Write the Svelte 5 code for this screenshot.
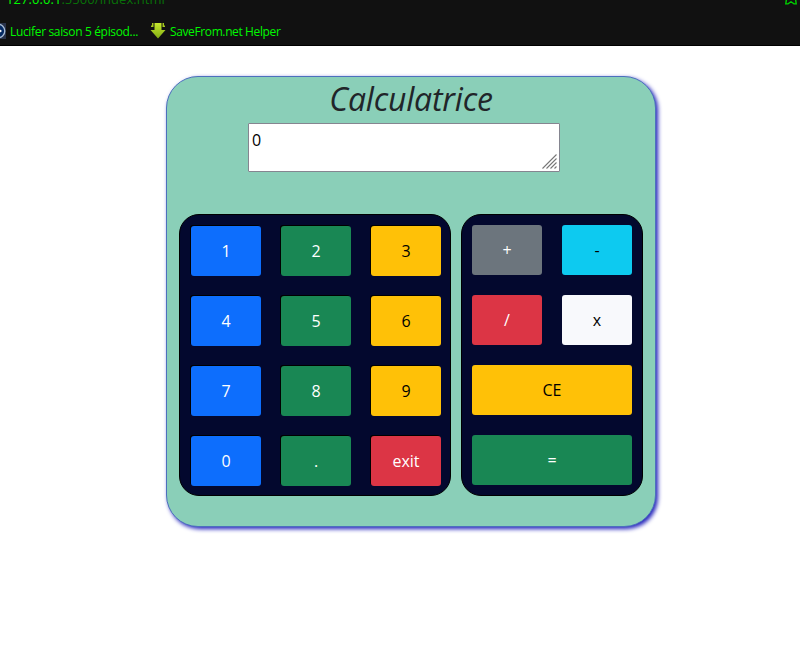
<script>
  const digits = [
    ['1', 'primary'], ['2', 'success'], ['3', 'warning'],
    ['4', 'primary'], ['5', 'success'], ['6', 'warning'],
    ['7', 'primary'], ['8', 'success'], ['9', 'warning'],
    ['0', 'primary'], ['.', 'success'], ['exit', 'danger']
  ];
  const operators = [
    ['+', 'secondary'], ['-', 'info'],
    ['/', 'danger'], ['x', 'light'],
    ['CE', 'warning wide'], ['=', 'success wide']
  ];
</script>

<div class="page">
  <header class="browser">
    <div class="address">
      <div class="url">127.0.0.1<span>:5500/index.html</span></div>
      <svg class="star" width="14" height="14" viewBox="0 0 14 14">
        <path d="M7 1 8.8 5 13 5.4 11.6 8.4 12.2 12.9 10 12.9 7 10.8 4 12.9 1.8 12.9 2.4 8.4 1 5.4 5.2 5Z" fill="none" stroke="#00d000" stroke-width="1.4" />
      </svg>
    </div>
    <nav class="bookmarks">
      <svg class="disc" width="6" height="16" viewBox="10 0 6 16">
        <rect width="16" height="16" fill="#28324a" />
        <circle cx="8" cy="8" r="6.8" fill="#062b64" stroke="#a9bdd6" stroke-width="1.3" />
        <path d="M7 4.5 12 8 7 11.5Z" fill="#fff" />
      </svg>
      <span class="first">Lucifer saison 5 épisod...</span>
      <svg class="arrow" width="16" height="16" viewBox="0 0 16 16">
        <defs>
          <linearGradient id="lime" x2="0" y2="1">
            <stop stop-color="#c6e72d" />
            <stop offset="1" stop-color="#80ad13" />
          </linearGradient>
        </defs>
        <path d="M4.5 0H11.5V7H15.5L8 15.5.5 7H4.5Z" fill="url(#lime)" />
        <path d="M2 0H3.5V4H1V2.5H2ZM12.5 0H14V2.5H15V4H12.5Z" fill="#a5c81e" />
      </svg>
      <span class="second">SaveFrom.net Helper</span>
    </nav>
  </header>

  <main class="calculator">
    <h1>Calculatrice</h1>
    <div class="display">
      0
      <svg width="15" height="15" viewBox="0 0 15 15">
        <path d="M.5 14.5 14.5.5M4.5 14.5 14.5 4.5M8.5 14.5 14.5 8.5M12.5 14.5 14.5 12.5" stroke="#777" stroke-width="1.1" />
      </svg>
    </div>
    <div class="panels">
      <section class="panel digits">
        {#each digits as [label, tone]}
          <button class={tone}>{label}</button>
        {/each}
      </section>
      <section class="panel operators">
        {#each operators as [label, tone]}
          <button class={tone}>{label}</button>
        {/each}
      </section>
    </div>
  </main>
</div>

<style>
  :global(body) { margin: 0; background: #fff; }
  * { box-sizing: border-box; }
  .page {
    height: 649px;
    overflow: hidden;
    font-family: "Open Sans", "Noto Sans", sans-serif;
  }
  .browser {
    height: 46px;
    background: #111;
    border-bottom: 1px solid #000;
    overflow: hidden;
    color: #00f800;
  }
  .address {
    height: 23px;
    display: flex;
    justify-content: space-between;
    margin-top: -10px;
    padding: 0 2px 0 6px;
  }
  .url { font-size: 13px; line-height: 18px; letter-spacing: 0.06px; white-space: nowrap; }
  .url span { color: #087008; }
  .star { margin-top: 1px; }
  .bookmarks {
    display: flex;
    align-items: center;
    height: 16px;
    margin-top: 10px;
    font-size: 12px;
    white-space: nowrap;
  }
  .bookmarks svg { flex: none; }
  .first { width: 128px; margin-left: 4px; margin-right: 12px; letter-spacing: -0.34px; }
  .second { margin-left: 4px; letter-spacing: -0.38px; }
  .calculator {
    width: 490px;
    height: 451px;
    margin: 30px 0 0 166px;
    border: 1px solid #4c70bd;
    border-radius: 32px;
    background: #8acfb8;
    box-shadow: 2px 2px 4px #2222bb;
  }
  h1 {
    margin: 0;
    height: 46px;
    text-align: center;
    font-size: 32px;
    line-height: 44px;
    letter-spacing: -0.2px;
    font-style: italic;
    font-weight: 400;
    color: #212529;
  }
  .display {
    position: relative;
    width: 312px;
    height: 49px;
    margin-left: 81px;
    padding: 4px 3px;
    border: 1px solid #858590;
    border-radius: 1px;
    background: #fff;
    color: #000;
    font-size: 16px;
    line-height: 24px;
  }
  .display svg { position: absolute; right: 2px; bottom: 2px; }
  .panels { display: flex; gap: 10px; margin: 42px 0 0 12px; }
  .panel {
    display: grid;
    grid-auto-rows: 50px;
    gap: 20px;
    height: 282px;
    border: 1px solid #000;
    border-radius: 20px;
    background: #03082e;
  }
  .digits { width: 272px; grid-template-columns: repeat(3, 70px); padding: 11px; }
  .operators { width: 182px; grid-template-columns: repeat(2, 70px); padding: 10px; }
  button {
    border: 0;
    border-radius: 3px;
    padding: 0;
    font-family: inherit;
    font-size: 16px;
    line-height: 24px;
    color: #fff;
  }
  .digits button { box-shadow: -1px -1px 0 #000; }
  .wide { grid-column: span 2; }
  .primary { background: #0d6efd; }
  .success { background: #198754; }
  .warning { background: #ffc107; color: #000; }
  .danger { background: #dc3545; }
  .secondary { background: #6c757d; }
  .info { background: #0dcaf0; color: #000; }
  .light { background: #f8f9fc; color: #000; }
</style>
